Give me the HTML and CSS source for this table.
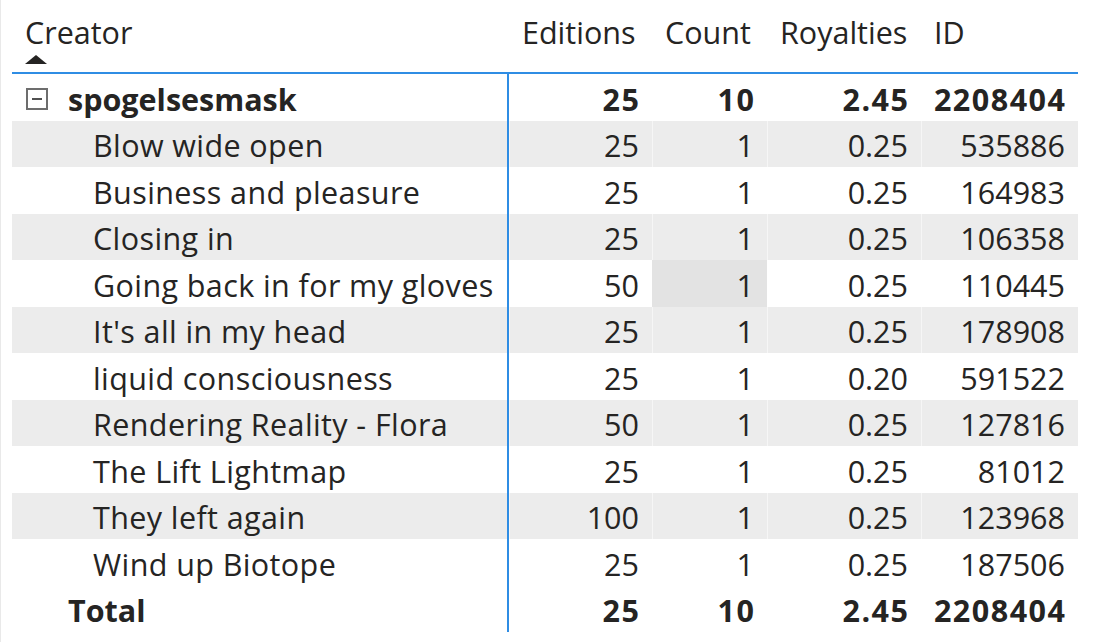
FILE: index.html
```html
<!DOCTYPE html>
<html>
<head>
<meta charset="utf-8">
<link rel="stylesheet" href="styles.css">
</head>
<body>
<div class="page">
  <div class="table">
    <div class="row head">
      <div class="hcell first">
        <span>Creator</span>
        <span class="sort"></span>
      </div>
      <div class="hcell">Editions</div>
      <div class="hcell">Count</div>
      <div class="hcell">Royalties</div>
      <div class="hcell">ID</div>
    </div>
    <div class="body">
      <div class="row group">
        <div class="cell first"><span class="toggle"></span><span class="gname">spogelsesmask</span></div>
        <div class="cell num">25</div>
        <div class="cell num">10</div>
        <div class="cell num">2.45</div>
        <div class="cell num">2208404</div>
      </div>
      <div class="row shade">
        <div class="cell first child">Blow wide open</div>
        <div class="cell num">25</div><div class="cell num">1</div><div class="cell num">0.25</div><div class="cell num">535886</div>
      </div>
      <div class="row">
        <div class="cell first child">Business and pleasure</div>
        <div class="cell num">25</div><div class="cell num">1</div><div class="cell num">0.25</div><div class="cell num">164983</div>
      </div>
      <div class="row shade">
        <div class="cell first child">Closing in</div>
        <div class="cell num">25</div><div class="cell num">1</div><div class="cell num">0.25</div><div class="cell num">106358</div>
      </div>
      <div class="row">
        <div class="cell first child">Going back in for my gloves</div>
        <div class="cell num">50</div><div class="cell num hl">1</div><div class="cell num">0.25</div><div class="cell num">110445</div>
      </div>
      <div class="row shade">
        <div class="cell first child">It's all in my head</div>
        <div class="cell num">25</div><div class="cell num">1</div><div class="cell num">0.25</div><div class="cell num">178908</div>
      </div>
      <div class="row">
        <div class="cell first child">liquid consciousness</div>
        <div class="cell num">25</div><div class="cell num">1</div><div class="cell num">0.20</div><div class="cell num">591522</div>
      </div>
      <div class="row shade">
        <div class="cell first child">Rendering Reality - Flora</div>
        <div class="cell num">50</div><div class="cell num">1</div><div class="cell num">0.25</div><div class="cell num">127816</div>
      </div>
      <div class="row">
        <div class="cell first child">The Lift Lightmap</div>
        <div class="cell num">25</div><div class="cell num">1</div><div class="cell num">0.25</div><div class="cell num">81012</div>
      </div>
      <div class="row shade">
        <div class="cell first child">They left again</div>
        <div class="cell num">100</div><div class="cell num">1</div><div class="cell num">0.25</div><div class="cell num">123968</div>
      </div>
      <div class="row">
        <div class="cell first child">Wind up Biotope</div>
        <div class="cell num">25</div><div class="cell num">1</div><div class="cell num">0.25</div><div class="cell num">187506</div>
      </div>
      <div class="row total">
        <div class="cell first">Total</div>
        <div class="cell num">25</div><div class="cell num">10</div><div class="cell num">2.45</div><div class="cell num">2208404</div>
      </div>
    </div>
  </div>
</div>
</body>
</html>
```

FILE: styles.css
```css
html, body {
  margin: 0;
  padding: 0;
  background: #ffffff;
}
body {
  width: 1100px;
  height: 642px;
  overflow: hidden;
  font-family: "Open Sans", "Noto Sans", sans-serif;
  color: #252423;
}
.page {
  height: 642px;
  border-left: 1px solid #e9e9e9;
  padding-left: 11px;
  box-sizing: border-box;
}
.table {
  width: 1066px;
}
.row {
  display: grid;
  grid-template-columns: 497px 143px 115px 154px 157px;
}
.head {
  height: 72px;
  border-bottom: 2px solid #2f8de4;
}
.hcell {
  font-size: 30.5px;
  padding-left: 13px;
  padding-top: 12px;
  line-height: 40px;
}
.hcell.first {
  display: flex;
  flex-direction: column;
  align-items: flex-start;
}
.sort {
  width: 0;
  height: 0;
  margin-top: 3px;
  border-left: 11px solid transparent;
  border-right: 11px solid transparent;
  border-bottom: 9px solid #252423;
}
.cell {
  height: 46.5px;
  box-sizing: border-box;
  padding-top: 3px;
  display: flex;
  align-items: center;
  font-size: 30.5px;
  white-space: nowrap;
}
.cell.first {
  border-right: 2px solid #2f8de4;
}
.cell.num {
  justify-content: flex-end;
  padding-right: 13px;
}
.shade .cell {
  background: #ececec;
}
.shade .cell + .cell {
  border-left: 1px solid #f6f6f6;
}
.cell.hl {
  background: #e3e3e3;
}
.child {
  padding-left: 81px;
  letter-spacing: 0.4px;
}
.group .cell, .total .cell {
  font-weight: 700;
}
.group .num, .total .num {
  letter-spacing: 1.5px;
  padding-right: 11.5px;
}
.group .first {
  padding-left: 14px;
}
.total .first {
  padding-left: 56px;
}
.toggle {
  width: 22px;
  height: 22px;
  box-sizing: border-box;
  border: 2px solid #6d6d6d;
  display: flex;
  align-items: center;
  justify-content: center;
  margin-right: 20px;
}
.toggle::after {
  content: "";
  width: 10px;
  height: 2px;
  background: #505050;
}
```
